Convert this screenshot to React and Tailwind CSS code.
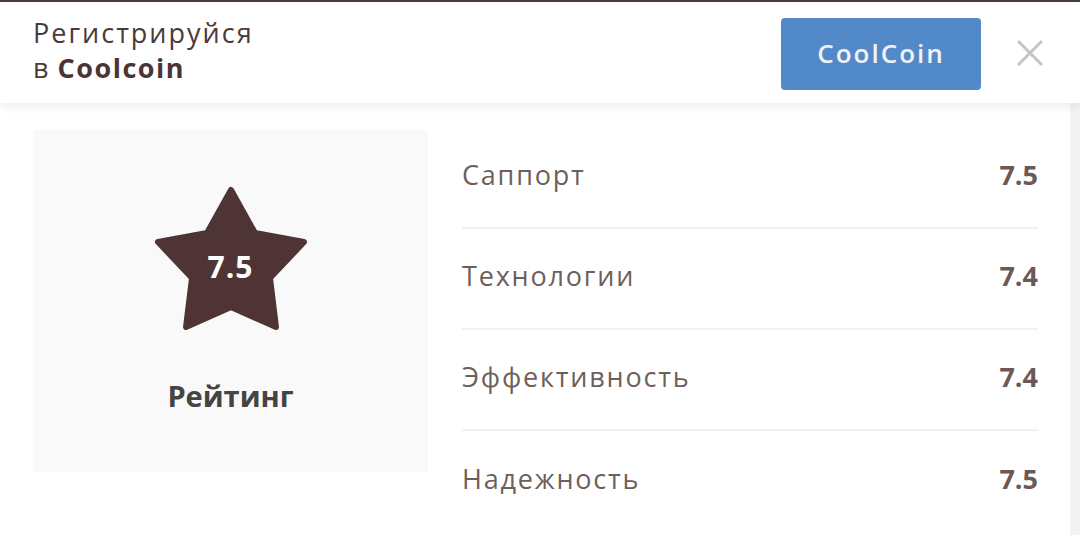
import React from "react";

const rows = [
  { label: "Саппорт", value: "7.5" },
  { label: "Технологии", value: "7.4" },
  { label: "Эффективность", value: "7.4" },
  { label: "Надежность", value: "7.5" },
];

function Star() {
  return (
    <div className="relative w-[160px] h-[150px] flex items-center justify-center">
      <svg viewBox="150 184 160 150" className="absolute inset-0 w-[160px] h-[150px]">
        <polygon
          points="230,191 254,234 303,243 269,279 275,328 230,308 185,328 191,279 157,243 206,234"
          fill="#4f3436"
          stroke="#4f3436"
          strokeWidth="6"
          strokeLinejoin="round"
        />
      </svg>
      <span className="relative mt-[18px] text-[30px] font-bold text-white leading-none tracking-[1px]">7.5</span>
    </div>
  );
}

export default function App() {
  return (
    <div
      className="w-[1080px] h-[535px] overflow-hidden bg-white flex flex-col border-t-2 border-[#4a3a3a]"
      style={{ fontFamily: '"Open Sans", "Liberation Sans", sans-serif' }}
    >
      <header className="relative z-10 h-[101px] shrink-0 flex items-center bg-white pl-[33px] pr-[37px] shadow-[0_4px_10px_rgba(0,0,0,0.07)]">
        <div className="flex-1 text-[27px] leading-[35px] text-[#4a3a3a] -mt-[5px]">
          <div className="tracking-[2px]">Регистрируйся</div>
          <div>
            в <span className="ml-[2px] font-bold text-[#4a3536] tracking-[1.5px]">Coolcoin</span>
          </div>
        </div>
        <button className="w-[200px] h-[72px] mt-[2px] rounded-[4px] bg-[#5289c9] text-[#f2f2f2] text-[26px] font-semibold tracking-[2px]">
          CoolCoin
        </button>
        <svg viewBox="0 0 26 26" className="ml-[36px] w-[26px] h-[26px]">
          <path d="M1 1 L25 25 M25 1 L1 25" stroke="#c5c5c5" strokeWidth="3" />
        </svg>
      </header>

      <div className="flex-1 flex">
        <main className="flex-1 flex items-start pt-[25px] pl-[33px]">
          <section className="mt-[2px] w-[395px] h-[342px] bg-[#f9f9f9] flex flex-col items-center pt-[53px]">
            <Star />
            <h2 className="mt-[48px] text-[29px] font-bold text-[#444444] leading-none">Рейтинг</h2>
          </section>
          <ul className="ml-[34px] w-[576px]">
            {rows.map((r, i) => (
              <li
                key={r.label}
                className={
                  i < rows.length - 1
                    ? "h-[101px] pb-[4px] flex items-center justify-between border-b-2 border-[#f1f1f1] text-[#6e5f5c]"
                    : "h-[101px] pb-[4px] flex items-center justify-between text-[#6e5f5c]"
                }
              >
                <span className="text-[27px] tracking-[1.8px]">{r.label}</span>
                <span className="text-[27px] font-bold text-[#6b5956]">{r.value}</span>
              </li>
            ))}
          </ul>
        </main>
        <div className="w-[10px] bg-[#f3f3f3]" />
      </div>
    </div>
  );
}
